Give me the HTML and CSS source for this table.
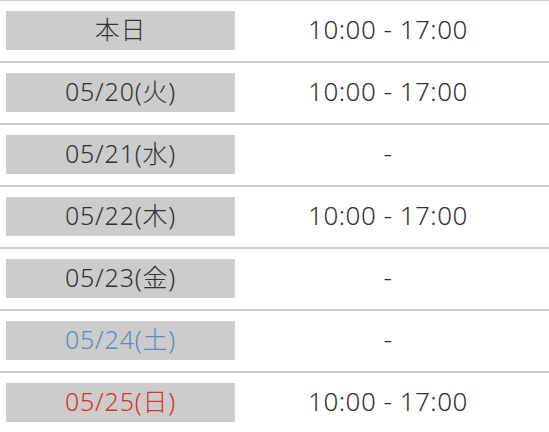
FILE: index.html
```html
<!DOCTYPE html>
<html lang="ja">
<head>
<meta charset="utf-8">
<link rel="stylesheet" href="styles.css">
</head>
<body>
<div class="schedule">
  <div class="row"><div class="date">本日</div><div class="time">10:00 - 17:00</div></div>
  <div class="row"><div class="date">05/20(火)</div><div class="time">10:00 - 17:00</div></div>
  <div class="row"><div class="date">05/21(水)</div><div class="time">-</div></div>
  <div class="row"><div class="date">05/22(木)</div><div class="time">10:00 - 17:00</div></div>
  <div class="row"><div class="date">05/23(金)</div><div class="time">-</div></div>
  <div class="row"><div class="date sat">05/24(土)</div><div class="time">-</div></div>
  <div class="row"><div class="date sun">05/25(日)</div><div class="time">10:00 - 17:00</div></div>
</div>
</body>
</html>
```
FILE: styles.css
```css
html, body {
  margin: 0;
  padding: 0;
  background: #fff;
}
body {
  font-family: "Noto Sans", "Noto Sans CJK JP", sans-serif;
  font-weight: 300;
  color: #333;
  font-size: 25px;
}
.schedule {
  margin-top: -1px;
}
.row {
  display: grid;
  grid-template-columns: 241px 1fr;
  height: 60px;
  border-top: 2px solid #cacaca;
}
.date {
  box-sizing: border-box;
  margin: 10px 0 0 6px;
  width: 229px;
  height: 39px;
  padding-bottom: 3px;
  background: #cccccc;
  display: flex;
  align-items: center;
  justify-content: center;
  line-height: 1;
  letter-spacing: 0.8px;
}
.date.sat { color: #5e8bc6; }
.date.sun { color: #dc3128; }
.time {
  display: flex;
  align-items: center;
  justify-content: center;
  padding-right: 14px;
  margin-top: -5px;
  line-height: 1;
  font-size: 26px;
  letter-spacing: 0.5px;
}
```
